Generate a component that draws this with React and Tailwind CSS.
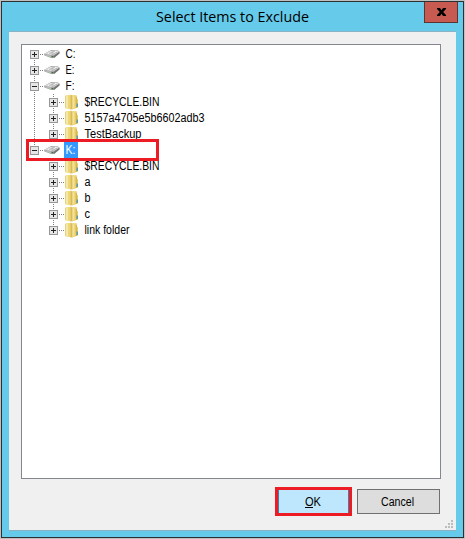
const ITEMS = [
  { label: 'C:', root: true, first: true, w: 10 },
  { label: 'E:', root: true, w: 9 },
  { label: 'F:', root: true, open: true, w: 9 },
  { label: '$RECYCLE.BIN', trunk: true, w: 75 },
  { label: '5157a4705e5b6602adb3', trunk: true, w: 120 },
  { label: 'TestBackup', trunk: true, last: true, w: 57 },
  { label: 'K:', root: true, open: true, last: true, selected: true, w: 10 },
  { label: '$RECYCLE.BIN', w: 75 },
  { label: 'a', w: 6 },
  { label: 'b', w: 6 },
  { label: 'c', w: 5.5 },
  { label: 'link folder', last: true, w: 45 },
];

function Label({ text, width, size, family, x = 0, baseline, underline }) {
  return (
    <svg width={width + x + 2} height={baseline + 6} className="block shrink-0 overflow-visible">
      <text x={x} y={baseline} fontSize={size} fontFamily={family} textLength={width} lengthAdjust="spacingAndGlyphs" fill="currentColor">
        {text}
      </text>
      {underline && <path d={`M${x} ${baseline + 2}h8`} stroke="currentColor" transform="translate(0 -.5)" />}
    </svg>
  );
}

/* Dotted connectors and expander for one tree row. */
function Branch({ item }) {
  const bx = item.root ? 8 : 27;
  const cx = bx + 4.5;
  return (
    <svg width={item.root ? 22 : 43} height="16" className="shrink-0" shapeRendering="crispEdges">
      <g stroke="#808080" strokeDasharray="1 1" fill="none">
        {item.trunk && <path d="M12.5 0V16" />}
        {!item.first && <path d={`M${cx} 0V8`} />}
        {!item.last && <path d={`M${cx} 8V16`} />}
        <path d={`M${bx + 10} 8.5H${item.root ? 22 : 43}`} />
      </g>
      <rect x={bx + 0.5} y="4.5" width="8" height="8" fill="#e6e6e6" stroke="#979797" />
      <path d={`M${bx + 2} 8.5h5`} stroke="#222" />
      {!item.open && <path d={`M${cx} 6v5`} stroke="#222" />}
    </svg>
  );
}

function Drive() {
  return (
    <svg width="16" height="16" className="shrink-0">
      <path d="M0 8 7 4h6l2.5 1.5v1.7L10 12H7L0 9.2z" fill="#a5a5a5" />
      <path d="M.5 7.8 7 4.2h5.8l2.3 1.6-5.6 3.9z" fill="#d0d0d0" />
      <path d="m3 7.6 4-2.3h2L7.5 7l-2 1.3zM9.5 5h3l.8.8L10.5 8 9 7z" fill="#f5f5f5" />
      <path d="m5 7.4 4.5-1.3M8 8.6l5-2.4M7 4.7l4 .7" stroke="#a2a2a2" strokeWidth=".8" />
      <path d="m9.5 9.7 6-4v1.7L10 12z" fill="#747474" />
      <path d="M.3 8.2 9 10v1.8L.5 9.2z" fill="#bdbdbd" />
      <path d="M7.5 9.8h1.8v1.6H7.5z" fill="#35752f" />
    </svg>
  );
}

function Folder() {
  return (
    <svg width="14" height="16" className="shrink-0">
      <path d="M.5 1.5 6 .8l1 .7h4.5v3l1.5 1v8l-6 2-6.5-1.2z" fill="#e5cd68" />
      <path d="M6.5 1.5h5v12l-5 1.8z" fill="#e6cb66" />
      <path d="M7.5 2h2v12l-2 .7z" fill="#f3e296" />
      <path d="M.5 1.8 5.5 1v14L.5 14z" fill="#f6e8a5" />
      <path d="M3 1.5 6 1v14.2l-3-.7z" fill="#ecd57a" />
      <path d="M6.2 1.2v14M11.5 3v11" stroke="#d0ae47" strokeWidth=".8" />
      <path d="M.5 2v12" stroke="#e6d382" />
      <path d="M11.5 9.5H13v3.5h-1.5z" fill="#5b9dac" />
    </svg>
  );
}

function TreeRow({ item }) {
  return (
    <div className={`relative flex h-4 items-center ${item.selected ? 'z-10' : ''}`}>
      <Branch item={item} />
      {item.root ? <Drive /> : <Folder />}
      <div className={item.root ? `ml-1 h-4 w-[14px] ${item.selected ? 'bg-[#3399ff] text-white' : ''}` : 'ml-[5px] h-4'}>
        <Label text={item.label} width={item.w} size={12} family="Liberation Sans, Arial, sans-serif" x={item.root ? 1.5 : 0.5} baseline={12} />
      </div>
      {item.selected && <div className="absolute -top-[3px] left-1 h-[22px] w-[133px] border-3 border-[#ed1c24]" />}
    </div>
  );
}

function Grip() {
  return (
    <svg width="9" height="9" fill="#bcbcbc" shapeRendering="crispEdges">
      <path d="M6 0h2v2h-2zM3 3h2v2h-2zM6 3h2v2h-2zM0 6h2v2h-2zM3 6h2v2h-2zM6 6h2v2h-2z" />
    </svg>
  );
}

export default function App() {
  return (
    <div className="h-[539px] w-[465px] overflow-hidden bg-[#bfbfbf] p-px text-black">
      <div className="flex h-[537px] w-[463px] flex-col border border-[#2d3033] bg-[#66caea] px-[7px]">
        <header className="flex h-[29px] shrink-0 items-start">
          <div className="ml-[147px]">
            <Label text="Select Items to Exclude" width={153} size={15} family="Open Sans, Noto Sans, sans-serif" baseline={20} />
          </div>
          <button className="-mr-[2px] ml-auto flex h-[21px] w-[34px] items-center justify-center border border-t-0 border-[#5b3532] bg-[#c75b52]">
            <svg width="9" height="8">
              <path d="M0 0h3l1.5 2.2L6 0h3v1L6.2 4 9 7v1H6L4.5 5.8 3 8H0V7l2.8-3L0 1z" fill="#000" />
            </svg>
          </button>
        </header>
        <main className="flex h-[500px] w-[447px] shrink-0 flex-col border-y border-[#8ab4c6] bg-[#f0f0f0] px-3 pt-3">
          <div className="h-[435px] w-[420px] shrink-0 border border-[#828790] bg-white pt-px">
            {ITEMS.map((item, i) => (
              <TreeRow key={i} item={item} />
            ))}
          </div>
          <footer className="mt-2 ml-[254px] flex shrink-0 items-start gap-[5px]">
            <button className="flex h-[29px] w-[77px] justify-center border-3 border-[#ed1c24] bg-[#bee6fd]">
              <span className="flex h-[23px] w-[71px] justify-center border-x border-[#3c7fb1]">
                <Label text="OK" width={16} size={12} family="Liberation Sans, Arial, sans-serif" baseline={16} underline />
              </span>
            </button>
            <button className="mt-[2px] flex h-[25px] w-[83px] justify-center border border-[#707070] bg-[#dddddd]">
              <Label text="Cancel" width={33} size={12} family="Liberation Sans, Arial, sans-serif" baseline={16} />
            </button>
          </footer>
          <div className="mt-1 -mr-[10px] flex justify-end">
            <Grip />
          </div>
        </main>
      </div>
    </div>
  );
}
